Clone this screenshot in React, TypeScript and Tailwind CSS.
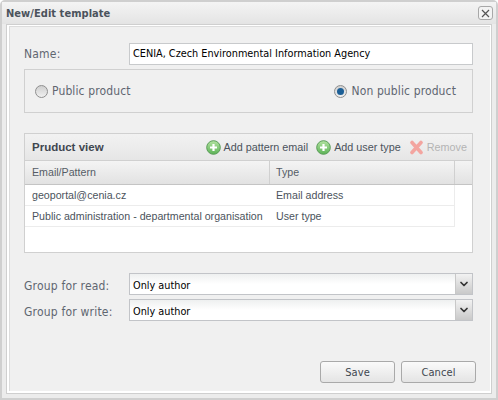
import { ChevronDown } from 'lucide-react'

const labelFont = "font-['DejaVu_Sans_Condensed','DejaVu_Sans',sans-serif]"

function AddIcon() {
  return (
    <svg width="15" height="15" viewBox="0 0 15 15" className="shrink-0">
      <defs>
        <linearGradient id="addFill" x1="0" y1="0" x2="0" y2="1">
          <stop offset="0" stopColor="#b4e3a2" />
          <stop offset="1" stopColor="#5cb356" />
        </linearGradient>
      </defs>
      <circle cx="7.5" cy="7.5" r="6.8" fill="url(#addFill)" stroke="#5a9c58" />
      <path d="M7.5 4v7M4 7.5h7" stroke="#fff" strokeWidth="2.2" />
    </svg>
  )
}

function RemoveIcon() {
  return (
    <svg width="15" height="15" viewBox="0 0 15 15" className="shrink-0">
      <path d="M3 2.5l9 10M12 2.5l-9 10" stroke="#f3a5a0" strokeWidth="3.6" strokeLinecap="round" />
    </svg>
  )
}

function Radio({ checked, label }: { checked?: boolean; label: string }) {
  return (
    <div className={`flex items-center gap-[4px] text-[12px] tracking-[0.12px] text-[#5f6670] ${labelFont}`}>
      <span className="flex h-[13px] w-[13px] items-center justify-center rounded-full border border-[#8f8f8f] bg-gradient-to-b from-[#cfcfcf] to-[#f0f0f0]">
        {checked && <span className="h-[7px] w-[7px] rounded-full bg-[#1c5f96]" />}
      </span>
      {label}
    </div>
  )
}

function SelectRow({ label }: { label: string }) {
  return (
    <div className="flex h-[22px] items-center">
      <label className={`w-[105px] shrink-0 pt-[3px] text-[12px] tracking-[0.2px] text-[#5f6670] ${labelFont}`}>{label}</label>
      <div className="flex h-full flex-1 border border-[#c2c4c8] bg-gradient-to-b from-[#eef0f0] via-white to-white">
        <span className={`flex-1 pl-[3px] pt-[1px] text-[10.8px] leading-[22px] text-black ${labelFont}`}>Only author</span>
        <span className="flex w-[17px] items-center justify-center border-l border-[#c8c8c8] bg-gradient-to-b from-[#f2f2f2] to-[#c9c9c9]">
          <ChevronDown size={12} strokeWidth={3.5} className="text-[#333]" />
        </span>
      </div>
    </div>
  )
}

export default function App() {
  return (
    <div className="flex h-[400px] w-[498px] flex-col rounded-t-[5px] border-2 border-[#cfcfcf] bg-[#ececec] font-['Liberation_Sans',sans-serif]">
      {/* Title bar */}
      <div className="flex h-[22px] shrink-0 items-center justify-between bg-gradient-to-b from-[#f4f4f4] to-[#e4e4e4] pl-1 pr-[3px]">
        <span className={`pt-[2px] text-[11px] font-bold tracking-[0.05px] text-[#4b535c] ${labelFont}`}>New/Edit template</span>
        <span className="flex h-[14px] w-[15px] items-center justify-center rounded-[3px] border border-[#a8a8a8] bg-[#f3f3f3]">
          <svg width="9" height="9" viewBox="0 0 9 9">
            <path d="M1 1l7 7M8 1L1 8" stroke="#555" strokeWidth="1.2" />
          </svg>
        </span>
      </div>

      {/* Body */}
      <div className="mx-1 mb-1 flex flex-1 flex-col border border-[#cfcfcf] bg-white pl-[2px] pr-[1px] pt-[1px] pb-[2px]">
        <div className="flex flex-1 flex-col border-l border-t border-[#dcdcdc] bg-[#f0f0f0] pl-[14px] pr-[17px] pt-[16px]">
          <div className="flex h-[22px] items-center">
            <label className={`w-[105px] shrink-0 text-[12px] tracking-[0.2px] text-[#5f6670] ${labelFont}`}>Name:</label>
            <div className={`flex h-full flex-1 items-center border border-[#c8cacc] bg-white pl-[3px] text-[10.8px] text-black ${labelFont}`}>
              CENIA, Czech Environmental Information Agency
            </div>
          </div>

          <div className="mt-1 flex h-[44px] items-center justify-between border border-[#d0d0d0] pl-[10px] pr-[16px]">
            <Radio label="Public product" />
            <Radio checked label="Non public product" />
          </div>

          {/* Product view grid */}
          <div className="mt-[20px] flex h-[120px] flex-col border border-[#d0d0d0] bg-white">
            <div className="flex h-[27px] shrink-0 items-center justify-between border-b border-[#d0d0d0] bg-gradient-to-b from-[#f2f2f2] to-[#e6e6e6] pl-[7px] pr-[5px]">
              <span className="pt-[2px] text-[11.5px] font-bold text-[#3f4750]">Pruduct view</span>
              <div className="flex items-center gap-[3px] text-[10.8px] text-[#4b535c]">
                <AddIcon />
                <span>Add pattern email</span>
                <span className="w-[2px]" />
                <AddIcon />
                <span>Add user type</span>
                <span className="w-[2px]" />
                <RemoveIcon />
                <span className="text-[#b4b4b4]">Remove</span>
              </div>
            </div>
            <div className="flex h-[24px] shrink-0 border-b border-[#c4c4c4] bg-gradient-to-b from-[#f4f4f4] to-[#e2e2e2] text-[10.65px] leading-[23px] text-[#555c66]">
              <div className="w-[245px] border-r border-[#d0d0d0] pl-[7px]">Email/Pattern</div>
              <div className="w-[185px] border-r border-[#d0d0d0] pl-[6px]">Type</div>
            </div>
            <div className="flex h-[21px] shrink-0 text-[10.65px] leading-[20px] text-[#4b535c]">
              <div className="flex w-[430px] border-b border-r border-[#ececec]">
                <div className="w-[245px] pl-[7px]">geoportal@cenia.cz</div>
                <div className="pl-[6px]">Email address</div>
              </div>
            </div>
            <div className="flex h-[21px] shrink-0 text-[10.65px] leading-[20px] text-[#4b535c]">
              <div className="flex w-[430px] border-b border-r border-[#ececec]">
                <div className="w-[245px] whitespace-nowrap pl-[7px]">Public administration - departmental organisation</div>
                <div className="pl-[6px]">User type</div>
              </div>
            </div>
          </div>

          <div className="mt-[20px] flex flex-col gap-1">
            <SelectRow label="Group for read:" />
            <SelectRow label="Group for write:" />
          </div>

          {/* Footer buttons */}
          <div className="-mr-[3px] mt-[40px] flex justify-end gap-[6px]">
            {['Save', 'Cancel'].map((text) => (
              <button
                key={text}
                type="button"
                className={`h-[22px] w-[75px] rounded-[3px] border border-[#a9a9a9] bg-gradient-to-b from-[#fafafa] to-[#e4e4e4] pt-[3px] text-[11px] tracking-[0.1px] text-[#3f4750] ${labelFont}`}
              >
                {text}
              </button>
            ))}
          </div>
        </div>
      </div>
    </div>
  )
}
